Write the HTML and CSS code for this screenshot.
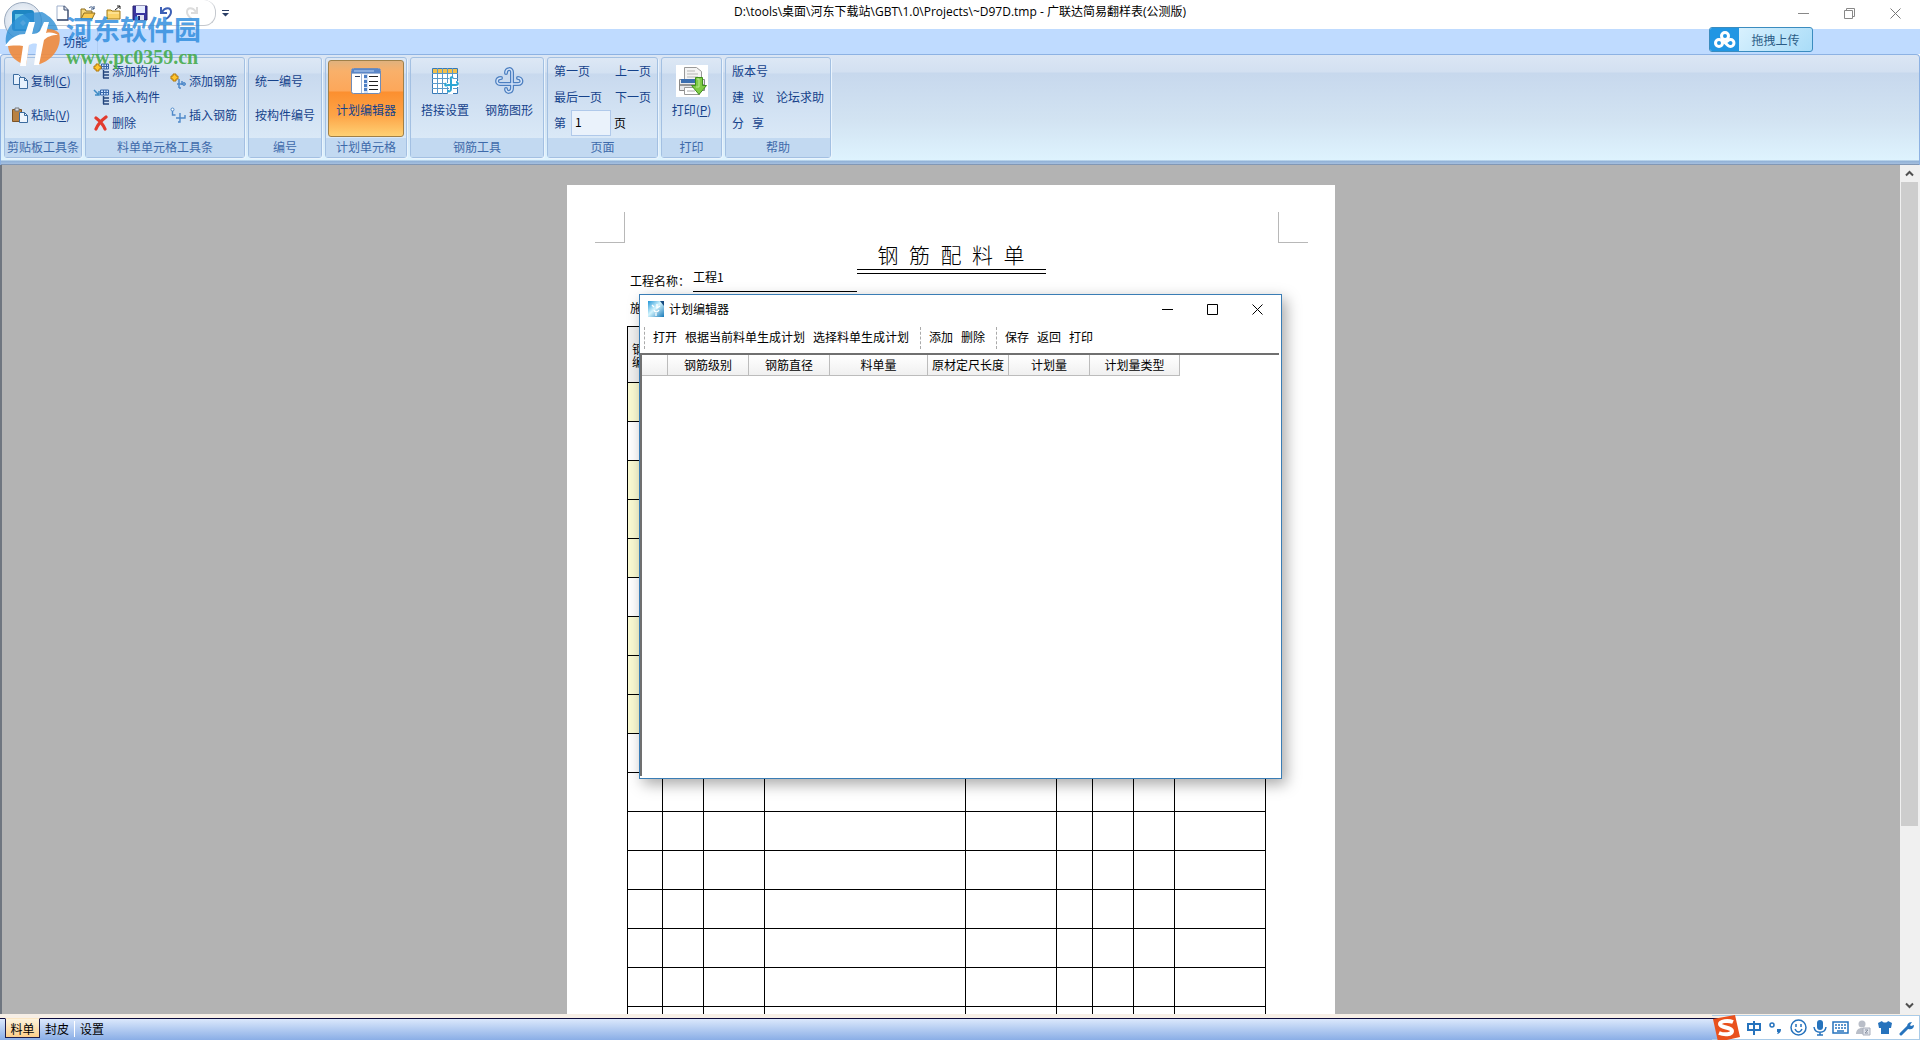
FILE: index.html
```html
<!DOCTYPE html>
<html lang="zh-CN">
<head>
<meta charset="utf-8">
<title>广联达简易翻样表</title>
<link rel="stylesheet" href="styles.css">
</head>
<body>
<div class="app">
  <header class="titlebar">
    <div class="quick">
      <button class="quick-btn" aria-label="新建"><svg width="16" height="16" viewBox="0 0 16 16"><path d="M3 1h7l4 4v10H3z" fill="#fff" stroke="#9fb0cc"/><path d="M10 1l4 4v10H3" fill="none" stroke="#3b4a6b" stroke-width="1.3"/><path d="M10 1v4h4" fill="#dde6f5" stroke="#3b4a6b"/></svg></button>
      <button class="quick-btn" aria-label="打开"><svg width="16" height="16" viewBox="0 0 16 16"><path d="M1 14V4h4l1 2h6v3" fill="#f5d67a" stroke="#8c6d1f"/><path d="M1 14l3-6h11l-3 6z" fill="#fbc94e" stroke="#8c6d1f"/><path d="M9 3c2-2 4-1 5 1m0-3v3h-3" fill="none" stroke="#33507f"/></svg></button>
      <button class="quick-btn" aria-label="关闭"><svg width="16" height="16" viewBox="0 0 16 16"><path d="M1 14V5h4l1 1h8v8z" fill="#fbd368" stroke="#a27b1c"/><path d="M2 8h11" stroke="#fff0b8"/><path d="M9 5l5-4M11 1h3v3" fill="none" stroke="#222"/></svg></button>
      <button class="quick-btn" aria-label="保存"><svg width="16" height="16" viewBox="0 0 16 16"><path d="M1 1h14v14H1z" fill="#3a35a0" stroke="#28246f"/><path d="M4 1h9v7H4z" fill="#e6edff"/><path d="M5 10h7v5H5z" fill="#dfe1ef"/><path d="M6 11h2v4H6z" fill="#28246f"/></svg></button>
      <button class="quick-btn" aria-label="撤销"><svg width="16" height="16" viewBox="0 0 16 16"><path d="M3 2v6h6" fill="none" stroke="#3d5fb5" stroke-width="2"/><path d="M4 7c3-5 9-5 9 0 0 3-2 5-5 7" fill="none" stroke="#3d5fb5" stroke-width="2"/></svg></button>
      <button class="quick-btn" aria-label="重做"><svg width="16" height="16" viewBox="0 0 16 16"><path d="M13 2v6H7" fill="none" stroke="#dcdcdc" stroke-width="2"/><path d="M12 7c-3-5-9-5-9 0 0 3 2 5 5 7" fill="none" stroke="#dcdcdc" stroke-width="2"/></svg></button>
    </div>
    <button class="quick-more" aria-label="自定义"><svg width="7" height="7" viewBox="0 0 7 7"><path d="M0 0h7v1H0zM0 3h7L3.500 6.500z" fill="#2b3f66"/></svg></button>
    <h1 class="caption">D:\tools\桌面\河东下载站\GBT\1.0\Projects\~D97D.tmp - 广联达简易翻样表(公测版)</h1>
    <div class="win-btns">
      <button class="win-btn" aria-label="最小化"><svg width="11" height="11"><path d="M0 5.500h11" stroke="#888"/></svg></button>
      <button class="win-btn" aria-label="还原"><svg width="11" height="11" fill="none" stroke="#888"><path d="M.5 2.500h8v8h-8zM2.500 2.500v-2h8v8h-2"/></svg></button>
      <button class="win-btn" aria-label="关闭"><svg width="11" height="11"><path d="M.5.5l10 10m0-10l-10 10" stroke="#777"/></svg></button>
    </div>
  </header>

  <nav class="tabs"><a class="tab" href="#ribbon">功能</a></nav>

  <section class="ribbon" id="ribbon">
    <div class="group g-clip">
      <div class="group-body">
        <div class="col two">
          <button class="cmd"><svg width="16" height="16" viewBox="0 0 16 16" fill="#e6f1fd" stroke="#3c6c9f"><path d="M1.500 1.500h5l2 2v8h-7z"/><path d="M7.500 4.500h5l3 3v8h-8z"/><path d="M12.500 4.500v3h3" fill="none"/></svg>复制(<u>C</u>)</button>
          <button class="cmd"><svg width="16" height="16" viewBox="0 0 16 16"><path d="M.5 2.500h9v12h-9z" fill="#b98243" stroke="#7d5426"/><path d="M3 1h4v3H3z" fill="#d9dde6" stroke="#777"/><path d="M7.500 5.500h5l3 3v7h-8z" fill="#eef5fd" stroke="#3c6c9f"/><path d="M12.500 5.500v3h3" fill="none" stroke="#3c6c9f"/></svg>粘贴(<u>V</u>)</button>
        </div>
      </div>
      <div class="group-name">剪贴板工具条</div>
    </div>
    <div class="group g-cell">
      <div class="group-body">
        <div class="col three">
          <button class="cmd"><svg width="16" height="16" viewBox="0 0 16 16"><path d="M8.500 1h7v5h-7z" fill="#cfe3ff" stroke="#3464a8"/><path d="M9 3.500h6M11 1v5M13.500 1v5" stroke="#3464a8"/><path d="M10.500 7v8M10 9h6M10 12h6M10 15h6" stroke="#24467d" stroke-width="1.400"/><path d="M3 1h3v2h2v3H6v2H3V6H1V3h2z" fill="#ffc52e" stroke="#b27608"/></svg>添加构件</button>
          <button class="cmd"><svg width="16" height="16" viewBox="0 0 16 16"><path d="M7.500 1h8v5h-8z" fill="#cfe3ff" stroke="#3464a8"/><path d="M8 3.500h7M10.500 1v5M13 1v5" stroke="#3464a8"/><path d="M10.500 7v8M10 9h6M10 12h6M10 15h6" stroke="#24467d" stroke-width="1.400"/><path d="M1 1l5 5M6 2v4H2" fill="none" stroke="#3f8cc5" stroke-width="1.500"/></svg>插入构件</button>
          <button class="cmd"><svg width="16" height="16" viewBox="0 0 16 16"><path d="M3 3c4 3 7 6 9 11M13 2C9 5 5 9 3 14" fill="none" stroke="#e23b2e" stroke-width="3.200" stroke-linecap="round"/></svg>删除</button>
        </div>
        <div class="col two">
          <button class="cmd"><svg width="16" height="16" viewBox="0 0 16 16"><path d="M9 6v9M7 11h8M9 15h2M12 8v4" stroke="#4f89c9" stroke-width="1.500" fill="none"/><circle cx="14" cy="11" r="1.500" fill="none" stroke="#4f89c9"/><path d="M3 1h3v2h2v3H6v2H3V6H1V3h2z" fill="#ffc52e" stroke="#b27608"/></svg>添加钢筋</button>
          <button class="cmd"><svg width="16" height="16" viewBox="0 0 16 16"><circle cx="2.500" cy="2.500" r="1.500" fill="#fff" stroke="#4f89c9"/><path d="M2.500 4v4h3M10 6v9H8M6 11h9v-3" stroke="#4f89c9" stroke-width="1.400" fill="none"/></svg>插入钢筋</button>
        </div>
      </div>
      <div class="group-name">料单单元格工具条</div>
    </div>
    <div class="group g-num">
      <div class="group-body">
        <div class="col two">
          <button class="cmd">统一编号</button>
          <button class="cmd">按构件编号</button>
        </div>
      </div>
      <div class="group-name">编号</div>
    </div>
    <div class="group g-plan">
      <div class="group-body">
        <button class="big active"><svg width="32" height="32" viewBox="0 0 32 32"><rect x="1.500" y="3.500" width="29" height="25" rx="2" fill="#fff" stroke="#6f8cb8"/><path d="M2 4h28v4H2z" fill="#5a86c7"/><path d="M4 6h20" stroke="#b8d3f5"/><path d="M14 9h4v19h-4z" fill="#d6e3f6"/><path d="M2 8.500h28M11.500 9v19" stroke="#9db4d6"/><path d="M5 11.500h5" stroke="#2d3d5c"/><path d="M19 11.500h9M19 16.500h9M19 20.500h9M19 24.500h9" stroke="#222"/><path d="M14 10h3v3h-3zM14 15h3v3h-3zM14 19h3v3h-3zM14 23h3v3h-3z" fill="#4d7fc4"/></svg>计划编辑器</button>
      </div>
      <div class="group-name">计划单元格</div>
    </div>
    <div class="group g-tool">
      <div class="group-body">
        <button class="big"><svg width="32" height="32" viewBox="0 0 32 32"><path d="M3.500 3.500h25v25h-25z" fill="#fff" stroke="#3778b5"/><path d="M4 4h24v4H4z" fill="#f3c04b"/><path d="M3 8.500h26M3 13.500h26M3 18.500h26M3 23.500h26M8.500 3v26M13.500 3v26M18.500 3v26M23.500 3v26" stroke="#5b9acb"/><path d="M22 12v15h-3M16 20h12v-4" fill="none" stroke="#fff" stroke-width="4"/><path d="M24 13c-2-2-3 0-2 2v9c0 3-3 3-3 1M17 18c-2 3 0 3 2 2h8c3 0 2-3 0-3" fill="none" stroke="#2ca6d4" stroke-width="2"/></svg>搭接设置</button>
        <button class="big"><svg width="32" height="32" viewBox="0 0 32 32" fill="none" stroke-linecap="round"><g stroke="#4c7fc0" stroke-width="4"><path d="M13 8c0-5 6-5 6-1v16c0 5-6 5-6 1M8 13c-5 0-5 6-1 6h18c5 0 4-6 0-6"/></g><g stroke="#d5e5fa" stroke-width="1.500"><path d="M13 8c0-5 6-5 6-1v16c0 5-6 5-6 1M8 13c-5 0-5 6-1 6h18c5 0 4-6 0-6"/></g></svg>钢筋图形</button>
      </div>
      <div class="group-name">钢筋工具</div>
    </div>
    <div class="group g-page">
      <div class="group-body">
        <div class="page-grid">
          <button class="cmd">第一页</button><button class="cmd">上一页</button>
          <button class="cmd">最后一页</button><button class="cmd">下一页</button>
          <label class="goto"><span>第</span><input class="goto-input" type="text" value="1" aria-label="页码"><span class="goto-unit">页</span></label>
        </div>
      </div>
      <div class="group-name">页面</div>
    </div>
    <div class="group g-print">
      <div class="group-body">
        <button class="big"><svg width="32" height="32" viewBox="0 0 32 32"><path d="M0 0h32v32H0z" fill="#fff"/><path d="M8.500 14V2.500h12l5 4V14" fill="#f4f4f4" stroke="#999"/><path d="M11 6h8M11 9h11M11 12h11" stroke="#b5b5b5"/><path d="M3.500 14.500h25v11h-25z" fill="#e9e9ec" stroke="#888"/><path d="M5 14h22v4H5z" fill="#3c6eb0"/><path d="M4 20h24" stroke="#444"/><path d="M8.500 22.500h15v7h-15z" fill="#fff" stroke="#999"/><path d="M11 26h8" stroke="#aaa"/><path d="M19.500 12.500h7v8h4l-7.500 9-7.500-9h4z" fill="#7fcb45" stroke="#3f8f1d"/><path d="M21 14h2v8h-3" fill="none" stroke="#bdeb95"/></svg><span>打印(<u>P</u>)</span></button>
      </div>
      <div class="group-name">打印</div>
    </div>
    <div class="group g-help">
      <div class="group-body">
        <div class="help-grid">
          <button class="cmd wide">版本号</button>
          <button class="cmd spaced"><span>建</span><span>议</span></button><button class="cmd">论坛求助</button>
          <button class="cmd spaced"><span>分</span><span>享</span></button>
        </div>
      </div>
      <div class="group-name">帮助</div>
    </div>
  </section>

  <main class="workspace">
    <div class="canvas">
      <article class="sheet">
        <div class="marks"><i class="mark left"></i><i class="mark right"></i></div>
        <h2 class="sheet-title">钢&ensp;筋&ensp;配&ensp;料&ensp;单</h2>
        <div class="rule"></div>
        <div class="info"><span class="info-key">工程名称：</span><span class="info-val">工程1</span></div>
        <div class="info second">施</div>
        <table class="bill">
          <colgroup><col class="w35"><col class="w41"><col class="w61"><col class="w201"><col class="w91"><col class="w36"><col class="w41"><col class="w41"><col class="w91"></colgroup>
          <thead><tr><th>钢<br>编</th><th></th><th></th><th></th><th></th><th></th><th></th><th></th><th></th></tr></thead>
          <tbody>
            <tr class="hot"><td></td><td></td><td></td><td></td><td></td><td></td><td></td><td></td><td></td></tr>
            <tr><td></td><td></td><td></td><td></td><td></td><td></td><td></td><td></td><td></td></tr>
            <tr class="hot"><td></td><td></td><td></td><td></td><td></td><td></td><td></td><td></td><td></td></tr>
            <tr class="hot"><td></td><td></td><td></td><td></td><td></td><td></td><td></td><td></td><td></td></tr>
            <tr class="hot"><td></td><td></td><td></td><td></td><td></td><td></td><td></td><td></td><td></td></tr>
            <tr><td></td><td></td><td></td><td></td><td></td><td></td><td></td><td></td><td></td></tr>
            <tr class="hot"><td></td><td></td><td></td><td></td><td></td><td></td><td></td><td></td><td></td></tr>
            <tr class="hot"><td></td><td></td><td></td><td></td><td></td><td></td><td></td><td></td><td></td></tr>
            <tr class="hot"><td></td><td></td><td></td><td></td><td></td><td></td><td></td><td></td><td></td></tr>
            <tr><td></td><td></td><td></td><td></td><td></td><td></td><td></td><td></td><td></td></tr>
            <tr><td></td><td></td><td></td><td></td><td></td><td></td><td></td><td></td><td></td></tr>
            <tr><td></td><td></td><td></td><td></td><td></td><td></td><td></td><td></td><td></td></tr>
            <tr><td></td><td></td><td></td><td></td><td></td><td></td><td></td><td></td><td></td></tr>
            <tr><td></td><td></td><td></td><td></td><td></td><td></td><td></td><td></td><td></td></tr>
            <tr><td></td><td></td><td></td><td></td><td></td><td></td><td></td><td></td><td></td></tr>
            <tr><td></td><td></td><td></td><td></td><td></td><td></td><td></td><td></td><td></td></tr>
            <tr><td></td><td></td><td></td><td></td><td></td><td></td><td></td><td></td><td></td></tr>
          </tbody>
        </table>
      </article>
    </div>
    <div class="scroll">
      <button class="scroll-btn" aria-label="向上"><svg width="9" height="7"><path d="M1 5.500l3.500-3.500 3.500 3.500" fill="none" stroke="#505050" stroke-width="2"/></svg></button>
      <div class="scroll-track"><div class="scroll-thumb"></div></div>
      <button class="scroll-btn" aria-label="向下"><svg width="9" height="7"><path d="M1 1.500l3.500 3.500 3.500-3.500" fill="none" stroke="#505050" stroke-width="2"/></svg></button>
    </div>
  </main>

  <footer class="sheets">
    <button class="sheet-tab on">料单</button>
    <button class="sheet-tab">封皮</button>
    <i class="tab-sep"></i>
    <button class="sheet-tab">设置</button>
  </footer>

  <section class="dialog" role="dialog" aria-label="计划编辑器">
    <div class="dlg-title">
      <svg width="16" height="16" viewBox="0 0 16 16"><defs><linearGradient id="ic" x2="1" y2="1"><stop offset="0" stop-color="#1f94d6"/><stop offset=".45" stop-color="#d3f4fd"/><stop offset="1" stop-color="#1679b9"/></linearGradient></defs><path d="M0 0h13l3 3v13H0z" fill="url(#ic)"/><path d="M12 0h4v5z" fill="#154a80"/><path d="M4 4l2 2m3-3v4l3-2M6 9c1 3 4 2 5 0M8 12v3" stroke="#fff" fill="none" stroke-width="1.300"/></svg>
      <span class="dlg-name">计划编辑器</span>
      <button class="dlg-btn" aria-label="最小化"><svg width="11" height="11"><path d="M0 5.500h11" stroke="#000"/></svg></button>
      <button class="dlg-btn" aria-label="最大化"><svg width="11" height="11"><path d="M.5.5h10v10H.5z" fill="none" stroke="#000"/></svg></button>
      <button class="dlg-btn" aria-label="关闭"><svg width="11" height="11"><path d="M.5.5l10 10m0-10l-10 10" stroke="#000"/></svg></button>
    </div>
    <div class="dlg-tools">
      <i class="grip"></i><button class="tool">打开</button><button class="tool">根据当前料单生成计划</button><button class="tool">选择料单生成计划</button>
      <i class="grip gap"></i><button class="tool">添加</button><button class="tool">删除</button>
      <i class="grip gap"></i><button class="tool">保存</button><button class="tool">返回</button><button class="tool">打印</button>
    </div>
    <div class="dlg-grid">
      <table class="plan">
        <colgroup><col class="w26"><col class="w81"><col class="w81"><col class="w98"><col class="w81"><col class="w81"><col class="w90"></colgroup>
        <thead><tr><th></th><th>钢筋级别</th><th>钢筋直径</th><th>料单量</th><th>原材定尺长度</th><th>计划量</th><th>计划量类型</th></tr></thead>
      </table>
    </div>
  </section>

  <button class="upload"><span class="upload-icon"><svg width="22" height="18" viewBox="0 0 22 18" fill="none" stroke="#fff" stroke-width="3"><circle cx="11" cy="5" r="3.500"/><circle cx="5" cy="12" r="3.500"/><path d="M8 9l6 5.500a3.500 3.500 0 1 0 0-5L12 11"/></svg></span><span class="upload-text">拖拽上传</span></button>

  <button class="orb" aria-label="应用菜单"><svg width="24" height="24" viewBox="0 0 24 24"><rect x="1" y="1" width="22" height="21" rx="3" fill="#1e86c2"/><path d="M4 20V5h8l7 6v9z" fill="#5fc3e6"/><path d="M9 14l3-3 3 3-3 3z" fill="#e8fbff"/></svg></button>
  <div class="watermark">
    <svg class="wm-logo" width="64" height="60" viewBox="0 0 64 60"><path d="M2 34C0 18 12 6 24 3l14-1c8 4 14 10 16 18l-14 1-4 12H14z" fill="#2d8fd5" opacity=".8"/><path d="M36 20c8-2 15-1 19 3 4 14-8 30-24 32l2-14 4-10z" fill="#f08a3c" opacity=".9"/><path d="M4 36c3-2 6-3 9-3l12 2-3 20C12 52 5 46 4 36z" fill="#f08a3c" opacity=".9"/><path d="M1 36c6-9 13-12 20-12l4-12h6l-3 12c4 0 6-1 8-3l4-9h5l-3 11c5-1 9 0 12 2-7 0-11 2-14 5l-5 25h-5l3-21c-3-1-6 0-8 1l-3 21h-6l3-20c-7-1-13 0-18 0z" fill="#fff"/></svg>
    <span class="wm-name">河东软件园</span>
    <span class="wm-url">www.pc0359.cn</span>
  </div>

  <div class="ime">
    <svg class="ime-logo" width="28" height="28" viewBox="0 0 28 28"><path d="M1 5l22-4 5 22-22 5z" fill="#e9511d"/><path d="M21 8c-5-2-13-1-13 2 0 4 12 3 12 7 0 4-8 4-13 2" fill="none" stroke="#fff" stroke-width="4"/></svg>
    <svg width="16" height="16" viewBox="0 0 16 16" fill="none" stroke="#2673bd" stroke-width="2"><path d="M2 4h12v6H2zM8 1v14"/></svg>
    <svg width="16" height="16" viewBox="0 0 16 16"><circle cx="4" cy="5" r="2" fill="none" stroke="#2673bd" stroke-width="1.500"/><path d="M9 9h4c0 3-1 4-4 5l1-2H9z" fill="#2673bd"/></svg>
    <svg width="17" height="17" viewBox="0 0 17 17" fill="none" stroke="#2673bd" stroke-width="1.500"><circle cx="8.500" cy="8.500" r="7.500"/><path d="M5 10c2 4 5 4 7 0M6 5v3M11 5v3"/></svg>
    <svg width="14" height="17" viewBox="0 0 14 17"><rect x="4" y="1" width="6" height="10" rx="3" fill="#2673bd"/><path d="M1 8c1 7 11 7 12 0M7 13v3M4 16h6" fill="none" stroke="#2673bd" stroke-width="1.500"/></svg>
    <svg width="17" height="14" viewBox="0 0 17 14"><path d="M1 1h15v11H1z" fill="none" stroke="#2673bd" stroke-width="1.500"/><path d="M3 4h11M3 7h11" stroke="#2673bd" stroke-width="1.500" stroke-dasharray="2 1"/><path d="M5 10h7" stroke="#2673bd" stroke-width="1.500"/></svg>
    <svg width="16" height="16" viewBox="0 0 16 16"><circle cx="7" cy="4" r="3.500" fill="#b9bec8"/><path d="M1 14c0-8 11-8 12 0z" fill="#b9bec8"/><path d="M8 8h7v7H8z" fill="#dfe3ea" stroke="#a8aebb"/><path d="M10 10h3l-3 3h3" fill="none" stroke="#8b93a3"/></svg>
    <svg width="16" height="15" viewBox="0 0 16 15"><path d="M5 1c1 2 5 2 6 0l4 2-1 5h-2v6H4V8H2L1 3z" fill="#2673bd"/></svg>
    <svg width="16" height="16" viewBox="0 0 16 16"><path d="M2 14l7-7" stroke="#2673bd" stroke-width="3" stroke-linecap="round"/><path d="M13 2l-2 3 1 1 3-1c0 4-3 5-6 4-2-4 0-7 4-7z" fill="#2673bd"/></svg>
  </div>
</div>
</body>
</html>
```
FILE: styles.css
```css
* { box-sizing: border-box; }
body {
  margin: 0;
  font: 12px/16px "Noto Sans CJK SC", sans-serif;
  color: #000;
}
button {
  margin: 0;
  padding: 0;
  border: 0;
  background: none;
  font: inherit;
  color: inherit;
  white-space: nowrap;
}
svg { display: block; flex: none; }

.app {
  position: relative;
  display: flex;
  flex-direction: column;
  height: 100vh;
  overflow: hidden;
  background: #fff;
}

/* title bar */
.titlebar {
  display: grid;
  grid-template-columns: 216px 1fr 216px;
  height: 29px;
  background: #fff;
}
.quick {
  grid-column: 1;
  grid-row: 1;
  display: flex;
  align-items: center;
  gap: 10px;
  width: 176px;
  height: 26px;
  margin-left: 40px;
  padding-left: 14px;
  border: 1px solid #c4c8ce;
  border-top: 0;
  border-left: 0;
  border-radius: 0 12px 12px 0;
}
.quick-more { grid-column: 2; grid-row: 1; z-index: 1; width: 19px; height: 26px; padding-left: 6px; }
.caption {
  grid-column: 2;
  grid-row: 1;
  margin: 0;
  font: 400 12px/24px "Open Sans", "Noto Sans CJK SC", sans-serif;
  text-align: center;
}
.win-btns {
  grid-column: 3;
  grid-row: 1;
  display: flex;
  justify-content: flex-end;
  height: 26px;
  padding-right: 2px;
}
.win-btn { display: flex; width: 46px; align-items: center; justify-content: center; }

.tabs { height: 25px; padding-left: 54px; background: #bfdbff; }
.tab {
  display: block;
  width: 44px;
  padding-left: 9px;
  color: #15428b;
  line-height: 26px;
  text-decoration: none;
  border-right: 1px solid #b0cdf2;
}

/* ribbon */
.ribbon {
  display: flex;
  gap: 3px;
  height: 111px;
  padding: 2px 3px 0;
  color: #15428b;
  border: 1px solid #8db2e3;
  border-bottom: 0;
  border-radius: 4px 4px 0 0;
  background: linear-gradient(#dbe6f4 0, #d3e0f1 17px, #c7d8ed 18px, #d2e3f2 65px, #def3fe 105px, #8fb0d5 106px, #a6c0e0 109px, #5c6f8b 110px);
}
.group {
  display: flex;
  flex-direction: column;
  height: 101px;
  border: 1px solid #a3c0e2;
  border-radius: 3px;
  background: linear-gradient(#dde8f5 0, #d3e1f2 15px, #c8d9ee 16px, #dae9f7 81px);
  box-shadow: 1px 1px 0 #eaf4fd;
}
.group-body { display: flex; flex: 1; }
.group-name {
  height: 19px;
  line-height: 17px;
  text-align: center;
  color: #3e6aaa;
  background: #c2d9f1;
  white-space: nowrap;
}
.g-clip { width: 78px; }
.g-cell { width: 160px; }
.g-num { width: 74px; }
.g-plan { width: 82px; }
.g-tool { width: 134px; }
.g-page { width: 111px; }
.g-print { width: 61px; }
.g-help { width: 106px; }

.col { display: flex; flex-direction: column; align-items: flex-start; }
.two { padding-top: 6px; }
.two .cmd { height: 34px; }
.three .cmd { height: 26px; }
.cmd { display: flex; align-items: center; text-align: left; }
.cmd svg { margin-right: 3px; }
.g-clip .col { padding-left: 7px; }
.g-cell .col { padding-left: 7px; }
.g-cell .two { padding-left: 10px; }
.g-num .col { padding-left: 6px; }

.big {
  display: flex;
  flex-direction: column;
  align-items: center;
  gap: 5px;
  flex: 1;
  margin: 2px;
  padding-top: 5px;
}
.g-tool .group-body { padding: 0 2px; }
.g-tool .big { margin: 2px 0; }
.group .active {
  margin-bottom: 1px;
  border: 1px solid #a08048;
  border-radius: 3px;
  padding-top: 4px;
  background: linear-gradient(#e0b27e 0, #f9b06a 10px, #fda75a 30px, #fc8f2f 31px, #fda548 55px, #ffd376 76px);
}
.page-grid {
  display: grid;
  grid-template-columns: 61px auto;
  grid-template-rows: 26px 26px 26px;
  padding-left: 6px;
}
.goto { grid-column: 1 / 3; display: flex; align-items: center; }
.goto-input {
  width: 40px;
  height: 26px;
  margin: 0 3px 0 5px;
  padding: 0 3px 4px;
  border: 1px solid #b0c9ea;
  background: #eaf2fb;
  font: inherit;
}
.goto-unit { color: #000; }
.help-grid {
  display: grid;
  grid-template-columns: 44px auto;
  grid-template-rows: 26px 26px 26px;
  padding-left: 6px;
}
.wide { grid-column: 1 / 3; }
.spaced { gap: 8px; }

/* document area */
.workspace {
  display: flex;
  flex: 1;
  min-height: 0;
  padding-right: 2px;
  border-left: 2px solid #6f7680;
  background: #f0f0f0;
}
.canvas {
  flex: 1;
  padding-top: 20px;
  overflow: hidden;
  background: #b3b3b3;
}
.sheet {
  width: 768px;
  min-height: 1086px;
  margin: 0 auto;
  padding-top: 27px;
  background: #fff;
}
.marks { display: flex; justify-content: space-between; padding: 0 27px 0 28px; }
.mark { width: 30px; height: 31px; border-bottom: 1px solid #b8b8b8; }
.left { border-right: 1px solid #b8b8b8; }
.right { border-left: 1px solid #b8b8b8; }
.sheet-title {
  height: 26px;
  margin: 0;
  font-size: 21px;
  line-height: 22px;
  font-weight: 300;
  text-align: center;
  white-space: nowrap;
}
.rule {
  width: 189px;
  height: 5px;
  margin: 0 auto;
  border: solid #000;
  border-width: 1px 0;
}
.info { display: flex; height: 23px; margin-top: -5px; padding-left: 63px; }
.info-key { width: 63px; line-height: 24px; }
.info-val { width: 164px; border-bottom: 1px solid #000; }
.second { height: 34px; margin: 0; line-height: 32px; }
.bill {
  width: 639px;
  margin-left: 60px;
  table-layout: fixed;
  border-spacing: 0;
  border: solid #000;
  border-width: 1px 0 0 1px;
}
.bill th, .bill td { padding: 0; border: solid #000; border-width: 0 1px 1px 0; }
.bill td { height: 39px; }
.bill th {
  height: 56px;
  padding-left: 4px;
  font-weight: 400;
  line-height: 13px;
  text-align: left;
  background: #f0f0f0;
}
.bill .hot td { background: #fafad2; }
.w26 { width: 26px; }
.w35 { width: 35px; }
.w36 { width: 36px; }
.w41 { width: 41px; }
.w61 { width: 61px; }
.w81 { width: 81px; }
.w90 { width: 90px; }
.w91 { width: 91px; }
.w98 { width: 98px; }
.w201 { width: 201px; }

.scroll { display: flex; flex-direction: column; width: 18px; background: #f0f0f0; }
.scroll-btn { display: flex; align-items: center; justify-content: center; height: 17px; }
.scroll-track { flex: 1; }
.scroll-thumb { height: 79%; margin-left: 1px; background: #cdcdcd; }

.sheets {
  display: flex;
  height: 26px;
  padding: 4px 0 0 5px;
  background: linear-gradient(#f7efe6 0, #f7efe6 4px, #0a0a3c 4px, #0a0a3c 5px, #dbe8fc 5px, #8aaee6 26px);
}
.sheet-tab { width: 34px; height: 20px; line-height: 17px; text-align: center; }
.on {
  width: 35px;
  border: 1px solid #1c1c4c;
  border-top-color: #fbe6c4;
  line-height: 15px;
  background: linear-gradient(#fdf3dc, #fdcf8a);
}
.tab-sep { width: 1px; height: 16px; margin-top: 3px; background: #fff; }

/* plan editor window */
.dialog {
  position: absolute;
  top: 294px;
  left: calc(50% - 321px);
  display: flex;
  flex-direction: column;
  width: 643px;
  height: 485px;
  border: 1px solid #3a7db5;
  background: #fff;
  box-shadow: 4px 5px 14px rgba(0, 0, 0, .35);
}
.dlg-title { display: flex; align-items: center; height: 28px; padding: 0 1px 0 8px; }
.dlg-name { flex: 1; padding-left: 5px; }
.dlg-btn { display: flex; align-items: center; justify-content: center; width: 45px; height: 28px; }
.dlg-tools { display: flex; align-items: center; gap: 8px; height: 30px; padding-left: 4px; }
.grip { width: 1px; height: 22px; border-left: 1px dashed #aaa; }
.gap { margin-left: 3px; }
.tool { height: 18px; line-height: 16px; padding-bottom: 2px; }
.dlg-grid {
  flex: 1;
  margin: 0 2px 2px 0;
  border: solid #707070;
  border-width: 2px 0 0 2px;
}
.plan { width: 538px; table-layout: fixed; border-spacing: 0; }
.plan th {
  height: 21px;
  padding: 0;
  font-weight: 400;
  white-space: nowrap;
  background: linear-gradient(#fff, #f0f0f0);
  border: solid #bcbcbc;
  border-width: 0 1px 1px 0;
}

/* floating upload widget */
.upload {
  position: absolute;
  top: 27px;
  right: 107px;
  display: flex;
  width: 104px;
  height: 25px;
  border: 1px solid #3b8cbf;
  border-radius: 3px;
  overflow: hidden;
  color: #2a5c86;
  background: linear-gradient(135deg, #e6f7ff, #a9dcf8);
}
.upload-icon {
  display: flex;
  align-items: center;
  justify-content: center;
  width: 29px;
  height: 23px;
  background: #2196e3;
}
.upload-text { flex: 1; line-height: 24px; text-align: center; }

/* application button and site mark */
.orb {
  position: absolute;
  top: 2px;
  left: 4px;
  display: flex;
  align-items: center;
  justify-content: center;
  width: 38px;
  height: 38px;
  border: 1px solid #9aa9bd;
  border-radius: 50%;
  background: radial-gradient(#fff, #cdd9e8);
}
.watermark {
  position: absolute;
  top: 10px;
  left: 4px;
  display: grid;
  grid-template-columns: 62px auto;
  grid-template-rows: 36px 22px;
  pointer-events: none;
}
.wm-logo { grid-row: 1 / 3; }
.wm-name { font-size: 27px; line-height: 38px; font-weight: 700; color: rgba(50, 143, 222, .85); }
.wm-url { font: 700 20px/22px "Liberation Serif", serif; color: rgba(67, 170, 74, .9); }

/* input method bar */
.ime {
  position: absolute;
  right: 0;
  bottom: 0;
  display: flex;
  align-items: center;
  justify-content: space-between;
  width: 208px;
  height: 25px;
  padding-right: 4px;
  border: 1px solid #a9cbe8;
  border-left: 0;
  background: linear-gradient(90deg, transparent 20px, #fff 20px);
}
```
